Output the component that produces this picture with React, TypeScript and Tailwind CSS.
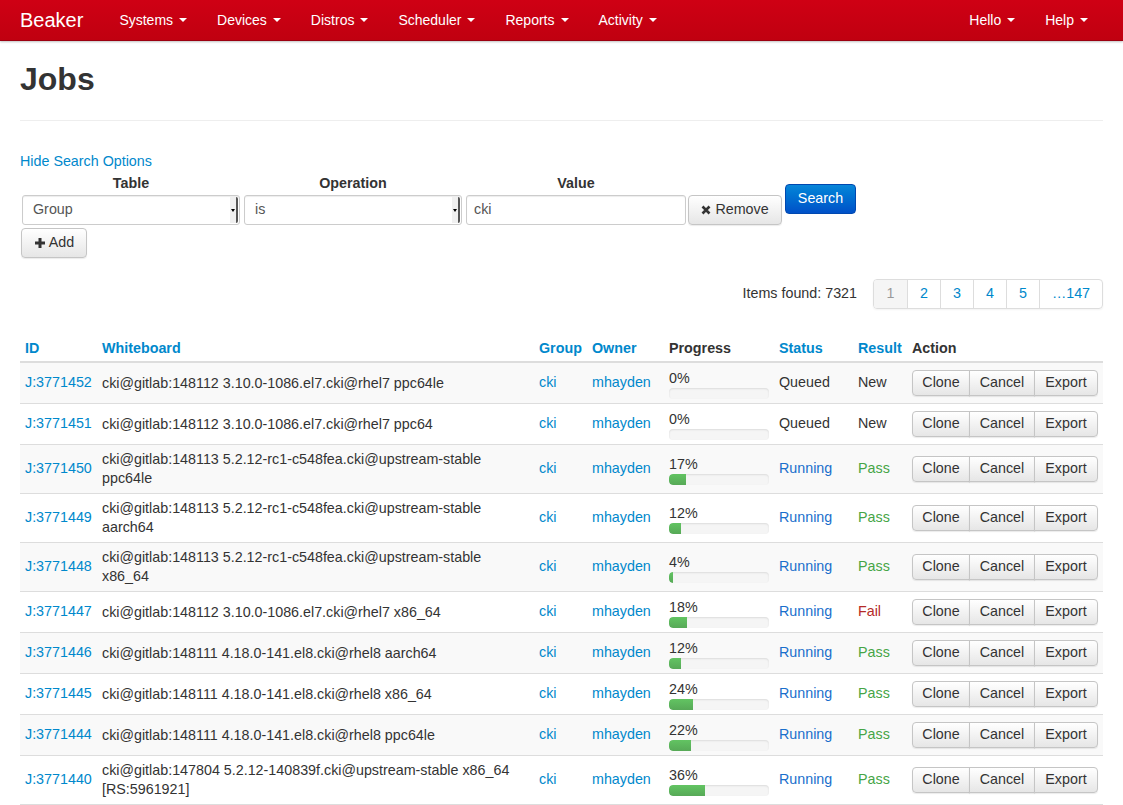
import React from "react";

type Job = {
  id: string;
  wb: string;
  pct: number;
  status: "Queued" | "Running";
  result: "New" | "Pass" | "Fail";
};

const JOBS: Job[] = [
  { id: "J:3771452", wb: "cki@gitlab:148112 3.10.0-1086.el7.cki@rhel7 ppc64le", pct: 0, status: "Queued", result: "New" },
  { id: "J:3771451", wb: "cki@gitlab:148112 3.10.0-1086.el7.cki@rhel7 ppc64", pct: 0, status: "Queued", result: "New" },
  { id: "J:3771450", wb: "cki@gitlab:148113 5.2.12-rc1-c548fea.cki@upstream-stable ppc64le", pct: 17, status: "Running", result: "Pass" },
  { id: "J:3771449", wb: "cki@gitlab:148113 5.2.12-rc1-c548fea.cki@upstream-stable aarch64", pct: 12, status: "Running", result: "Pass" },
  { id: "J:3771448", wb: "cki@gitlab:148113 5.2.12-rc1-c548fea.cki@upstream-stable x86_64", pct: 4, status: "Running", result: "Pass" },
  { id: "J:3771447", wb: "cki@gitlab:148112 3.10.0-1086.el7.cki@rhel7 x86_64", pct: 18, status: "Running", result: "Fail" },
  { id: "J:3771446", wb: "cki@gitlab:148111 4.18.0-141.el8.cki@rhel8 aarch64", pct: 12, status: "Running", result: "Pass" },
  { id: "J:3771445", wb: "cki@gitlab:148111 4.18.0-141.el8.cki@rhel8 x86_64", pct: 24, status: "Running", result: "Pass" },
  { id: "J:3771444", wb: "cki@gitlab:148111 4.18.0-141.el8.cki@rhel8 ppc64le", pct: 22, status: "Running", result: "Pass" },
  { id: "J:3771440", wb: "cki@gitlab:147804 5.2.12-140839f.cki@upstream-stable x86_64 [RS:5961921]", pct: 36, status: "Running", result: "Pass" },
];

const NAV = ["Systems", "Devices", "Distros", "Scheduler", "Reports", "Activity"];

function Caret() {
  return <span className="ml-[6px] inline-block h-0 w-0 border-x-[4px] border-t-[4px] border-x-transparent border-t-white align-middle" />;
}

function NavItem({ label }: { label: string }) {
  return (
    <a className="flex items-center px-[15px] text-[14px] text-white">
      {label}
      <Caret />
    </a>
  );
}

function FakeSelect({ value }: { value: string }) {
  return (
    <div className="relative flex h-[30px] w-[218px] items-center rounded-[3px] border border-[#ccc] bg-white pl-[10px] text-[14.3px] text-[#555] shadow-[inset_0_1px_1px_rgba(0,0,0,0.075)]">
      {value}
      <span className="absolute right-[1px] top-[1px] bottom-[1px] flex w-[8px] items-center justify-center rounded-r-[2px] border-r-[2px] border-[#555] bg-[#f0f0f0]">
        <span className="h-0 w-0 border-x-[2.5px] border-t-[3px] border-x-transparent border-t-black" />
      </span>
    </div>
  );
}

const btn =
  "inline-flex items-center justify-center border border-[#c5c5c5] bg-gradient-to-b from-white to-[#e6e6e6] text-[14.3px] text-[#333] shadow-[0_1px_1px_rgba(0,0,0,0.08)]";

function Progress({ pct }: { pct: number }) {
  return (
    <div>
      <div className="leading-[20px] text-[#333]">{pct}%</div>
      <div className="-mb-px h-[11px] w-[100px] overflow-hidden rounded-[4px] bg-[#f5f5f5] shadow-[inset_0_1px_2px_rgba(0,0,0,0.1)]">
        {pct > 0 && (
          <div className="h-full rounded-l-[4px] bg-gradient-to-b from-[#62c462] to-[#57a957]" style={{ width: `${pct}%` }} />
        )}
      </div>
    </div>
  );
}

export default function App() {
  return (
    <div className="min-h-[805px] bg-white font-['Liberation_Sans',Arial,sans-serif] text-[14.3px] text-[#333]">
      <header className="flex h-[41px] items-stretch justify-between border-b border-[#9c0010] bg-gradient-to-b from-[#cf0014] to-[#c00010] pl-[20px] shadow-[0_1px_2px_rgba(0,0,0,0.25)]">
        <div className="flex items-stretch">
          <a className="mr-[21px] flex items-center text-[20px] text-white">Beaker</a>
          {NAV.map((n) => (
            <NavItem key={n} label={n} />
          ))}
        </div>
        <div className="flex items-stretch pr-[20px]">
          <NavItem label="Hello" />
          <NavItem label="Help" />
        </div>
      </header>

      <main className="px-[20px]">
        <h1 className="mt-[21px] border-b border-[#eee] pb-[23px] text-[32px] font-bold leading-[35px] text-[#333]">Jobs</h1>

        <a className="mt-[30px] block leading-[20px] text-[#0088cc]">Hide Search Options</a>

        <div className="mt-[2px] flex items-start pl-[2px]">
          <div className="flex flex-col">
            <div className="h-[20px] text-center font-bold leading-[20px]">Table</div>
            <div className="mt-[2px]">
              <FakeSelect value="Group" />
            </div>
          </div>
          <div className="ml-[4px] flex flex-col">
            <div className="h-[20px] text-center font-bold leading-[20px]">Operation</div>
            <div className="mt-[2px]">
              <FakeSelect value="is" />
            </div>
          </div>
          <div className="ml-[4px] flex flex-col">
            <div className="h-[20px] text-center font-bold leading-[20px]">Value</div>
            <div className="mt-[2px] flex h-[30px] w-[220px] items-center rounded-[3px] border border-[#ccc] bg-white pl-[7px] text-[#555] shadow-[inset_0_1px_1px_rgba(0,0,0,0.075)]">
              cki
            </div>
          </div>
          <button className={`${btn} ml-[2px] mt-[22px] h-[30px] w-[94px] gap-[4px] rounded-[4px]`}>
            <svg width="10" height="10" viewBox="0 0 10 10">
              <path d="M1.5 1.5 L8.5 8.5 M8.5 1.5 L1.5 8.5" stroke="#333" strokeWidth="2.6" />
            </svg>
            Remove
          </button>
          <button className="ml-[3px] mt-[11px] h-[30px] w-[71px] rounded-[4px] border border-[#0048b0] bg-gradient-to-b from-[#0a86d8] to-[#0050c8] text-[14.3px] text-white">
            Search
          </button>
        </div>

        <button className={`${btn} ml-[1px] mt-[3px] h-[30px] w-[66px] gap-[3px] rounded-[4px]`}>
          <svg width="12" height="12" viewBox="0 0 12 12">
            <path d="M6 1 V11 M1 6 H11" stroke="#333" strokeWidth="3" />
          </svg>
          Add
        </button>

        <div className="mt-[21px] flex items-center justify-end">
          <span className="mr-[16px] text-[#333]">Items found: 7321</span>
          <div className="flex h-[30px] overflow-hidden rounded-[4px] border border-[#ddd] shadow-[0_1px_2px_rgba(0,0,0,0.05)]">
            <span className="flex w-[33px] items-center justify-center bg-[#f5f5f5] text-[#999]">1</span>
            {["2", "3", "4", "5"].map((p) => (
              <a key={p} className="flex w-[33px] items-center justify-center border-l border-[#ddd] text-[#0088cc]">
                {p}
              </a>
            ))}
            <a className="flex w-[63px] items-center justify-center border-l border-[#ddd] text-[#0088cc]">…147</a>
          </div>
        </div>

        <table className="mt-[24px] w-full table-fixed border-collapse text-left">
          <colgroup>
            <col className="w-[77px]" />
            <col className="w-[437px]" />
            <col className="w-[53px]" />
            <col className="w-[77px]" />
            <col className="w-[110px]" />
            <col className="w-[79px]" />
            <col className="w-[54px]" />
            <col className="w-[196px]" />
          </colgroup>
          <thead>
            <tr className="border-b-2 border-[#ddd]">
              {["ID", "Whiteboard", "Group", "Owner", "Progress", "Status", "Result", "Action"].map((h) => {
                const plain = h === "Progress" || h === "Action";
                return (
                  <th key={h} className={`px-[5px] pt-[5px] pb-[3px] font-bold leading-[20px] ${plain ? "text-[#333]" : "text-[#0088cc]"}`}>
                    {h}
                  </th>
                );
              })}
            </tr>
          </thead>
          <tbody>
            {JOBS.map((j, i) => (
              <tr key={j.id} className={`border-b border-[#ddd] ${i % 2 === 0 ? "bg-[#f9f9f9]" : "bg-white"}`}>
                <td className="p-[5px] align-middle text-[#0088cc]">{j.id}</td>
                <td className="p-[5px] align-middle leading-[19px] text-[#333]">{j.wb}</td>
                <td className="p-[5px] align-middle text-[#0088cc]">cki</td>
                <td className="p-[5px] align-middle text-[#0088cc]">mhayden</td>
                <td className="p-[5px] align-middle">
                  <Progress pct={j.pct} />
                </td>
                <td className={`p-[5px] align-middle ${j.status === "Running" ? "text-[#1a6fcc]" : "text-[#333]"}`}>{j.status}</td>
                <td
                  className={`p-[5px] align-middle ${
                    j.result === "Pass" ? "text-[#46a546]" : j.result === "Fail" ? "text-[#b52b27]" : "text-[#333]"
                  }`}
                >
                  {j.result}
                </td>
                <td className="p-[5px] align-middle">
                  <div className="flex">
                    <button className={`${btn} h-[26px] w-[58px] rounded-l-[4px]`}>Clone</button>
                    <button className={`${btn} -ml-px h-[26px] w-[66px]`}>Cancel</button>
                    <button className={`${btn} -ml-px h-[26px] w-[64px] rounded-r-[4px]`}>Export</button>
                  </div>
                </td>
              </tr>
            ))}
          </tbody>
        </table>
      </main>
    </div>
  );
}
